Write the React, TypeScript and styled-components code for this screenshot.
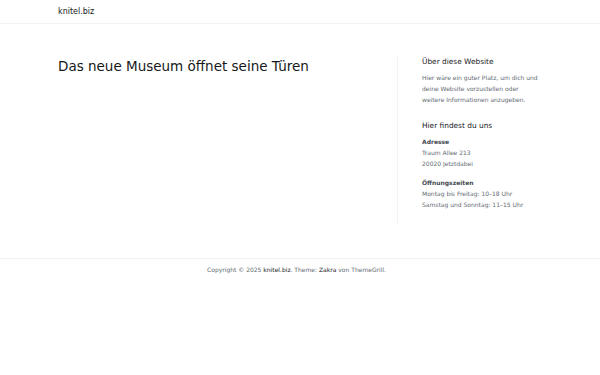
import { FC } from "react";
import styled, { createGlobalStyle } from "styled-components";

const GlobalStyle = createGlobalStyle`
  html, body {
    margin: 0;
    padding: 0;
    background: #ffffff;
    font-family: "DejaVu Sans", sans-serif;
    color: #646b73;
  }
`;

const Page = styled.div`
  width: 600px;
  min-height: 375px;
  background: #fff;
`;

const Header = styled.header`
  height: 23px;
  border-bottom: 1px solid #f1f2f4;
`;

const Container = styled.div`
  width: 484px;
  margin: 0 auto;
`;

const HeaderInner = styled(Container)`
  display: flex;
  align-items: center;
  height: 23px;
`;

const SiteTitle = styled.a`
  font-size: 8px;
  color: #16181a;
  text-decoration: none;
`;

const Main = styled(Container)`
  display: flex;
  padding: 31px 0 34px;
`;

const Content = styled.main`
  flex: 1;
  padding-top: 1px;
`;

const PostTitle = styled.h1`
  margin: 0;
  font-size: 13.5px;
  font-weight: 400;
  color: #16181a;
  line-height: 20px;
`;

const Sidebar = styled.aside`
  width: 120px;
  border-left: 1px solid #f1f2f4;
  padding: 1px 0 14px 24px;
`;

const Widget = styled.section`
  margin-bottom: 15px;
  &:last-child {
    margin-bottom: 0;
  }
`;

const WidgetTitle = styled.h2`
  margin: 0 0 4px;
  font-size: 7.4px;
  font-weight: 400;
  color: #16181a;
  line-height: 12px;
`;

const Text = styled.p`
  margin: 0;
  font-size: 6px;
  line-height: 11px;
  color: #646b73;
`;

const Label = styled.p`
  margin: 0;
  font-size: 6px;
  line-height: 11px;
  font-weight: 700;
  color: #454b52;
`;

const Block = styled.div`
  margin-bottom: 8px;
  &:last-child {
    margin-bottom: 0;
  }
`;

const Footer = styled.footer`
  border-top: 1px solid #f1f2f4;
  padding: 5px 7px 5px 0;
  text-align: center;
`;

const FooterText = styled.p`
  margin: 0;
  font-size: 6px;
  line-height: 11px;
  color: #646b73;
`;

const FooterLink = styled.a`
  color: #16181a;
  text-decoration: none;
`;

const App: FC = () => {
  return (
    <Page>
      <GlobalStyle />
      <Header>
        <HeaderInner>
          <SiteTitle href="#">knitel.biz</SiteTitle>
        </HeaderInner>
      </Header>
      <Main>
        <Content>
          <PostTitle>Das neue Museum öffnet seine Türen</PostTitle>
        </Content>
        <Sidebar>
          <Widget>
            <WidgetTitle>Über diese Website</WidgetTitle>
            <Text>
              Hier wäre ein guter Platz, um dich und deine Website vorzustellen
              oder weitere Informationen anzugeben.
            </Text>
          </Widget>
          <Widget>
            <WidgetTitle>Hier findest du uns</WidgetTitle>
            <Block>
              <Label>Adresse</Label>
              <Text>Traum Allee 213</Text>
              <Text>20020 Jetztdabei</Text>
            </Block>
            <Block>
              <Label>Öffnungszeiten</Label>
              <Text>Montag bis Freitag: 10–18 Uhr</Text>
              <Text>Samstag und Sonntag: 11–15 Uhr</Text>
            </Block>
          </Widget>
        </Sidebar>
      </Main>
      <Footer>
        <FooterText>
          Copyright © 2025 <FooterLink href="#">knitel.biz</FooterLink>. Theme:{" "}
          <FooterLink href="#">Zakra</FooterLink> von ThemeGrill.
        </FooterText>
      </Footer>
    </Page>
  );
};

export default App;
